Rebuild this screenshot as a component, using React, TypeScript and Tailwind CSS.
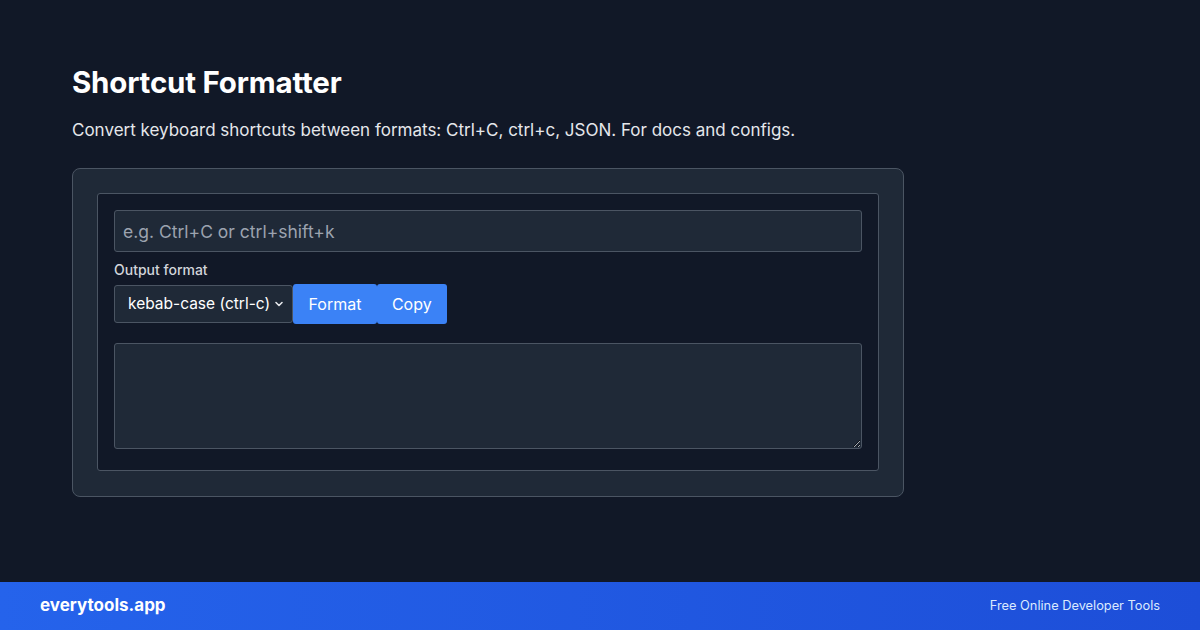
import React from 'react'

export default function App() {
  return (
    <div
      className="w-[1200px] h-[630px] bg-[#111827] flex flex-col text-white"
      style={{ fontFamily: 'Inter, "Noto Sans", sans-serif' }}
    >
      <main className="flex-1 px-[72px] pt-[64px]">
        <h1 className="text-[29.5px] leading-[36px] font-bold tracking-[-0.2px]">Shortcut Formatter</h1>
        <p className="mt-[16px] text-[17px] leading-[28px] text-[#e5e7eb]">
          Convert keyboard shortcuts between formats: Ctrl+C, ctrl+c, JSON. For docs and configs.
        </p>

        <div className="mt-[24px] w-[832px] bg-[#1f2937] border border-[#4b5563] rounded-lg p-6 pb-[25px]">
          <div className="bg-[#111827] border border-[#4b5563] rounded-[3px] p-4 pb-[21px]">
            <input
              placeholder="e.g. Ctrl+C or ctrl+shift+k"
              className="w-full h-[42px] bg-[#1f2937] border border-[#4b5563] rounded-[3px] px-[8px] text-[17.5px] text-white placeholder:text-[#9ca3af] outline-none"
            />
            <label className="block mt-[9px] text-[14px] leading-[18px] font-medium text-[#d1d5db]">Output format</label>
            <div className="mt-[5px] flex items-center">
              <div className="w-[179px] h-[38px] bg-[#1f2937] border border-[#4b5563] rounded-[3px] flex items-center justify-between pl-[13px] pr-[8px] text-[15.5px]">
                <span>kebab-case (ctrl-c)</span>
                <svg width="10" height="10" viewBox="0 0 10 10" fill="none">
                  <path d="M2 3.5 L5 6.5 L8 3.5" stroke="#e5e7eb" strokeWidth="1.6" strokeLinecap="round" strokeLinejoin="round" />
                </svg>
              </div>
              <button className="h-[40px] px-[15.5px] bg-[#3b82f6] rounded-[3px] text-[16px] text-white">Format</button>
              <button className="h-[40px] px-[15px] bg-[#3b82f6] rounded-[3px] text-[16px] text-white">Copy</button>
            </div>
            <div className="relative mt-[19px]">
              <textarea className="block w-full h-[106px] bg-[#1f2937] border border-[#4b5563] rounded-[3px] resize-y outline-none" />
            </div>
          </div>
        </div>
      </main>

      <footer className="h-[48px] bg-gradient-to-r from-[#2563eb] to-[#1d4ed8] flex items-center justify-between px-10">
        <span className="text-[17px] font-bold">everytools.app</span>
        <span className="text-[12.8px] text-[#dbeafe]">Free Online Developer Tools</span>
      </footer>
    </div>
  )
}
